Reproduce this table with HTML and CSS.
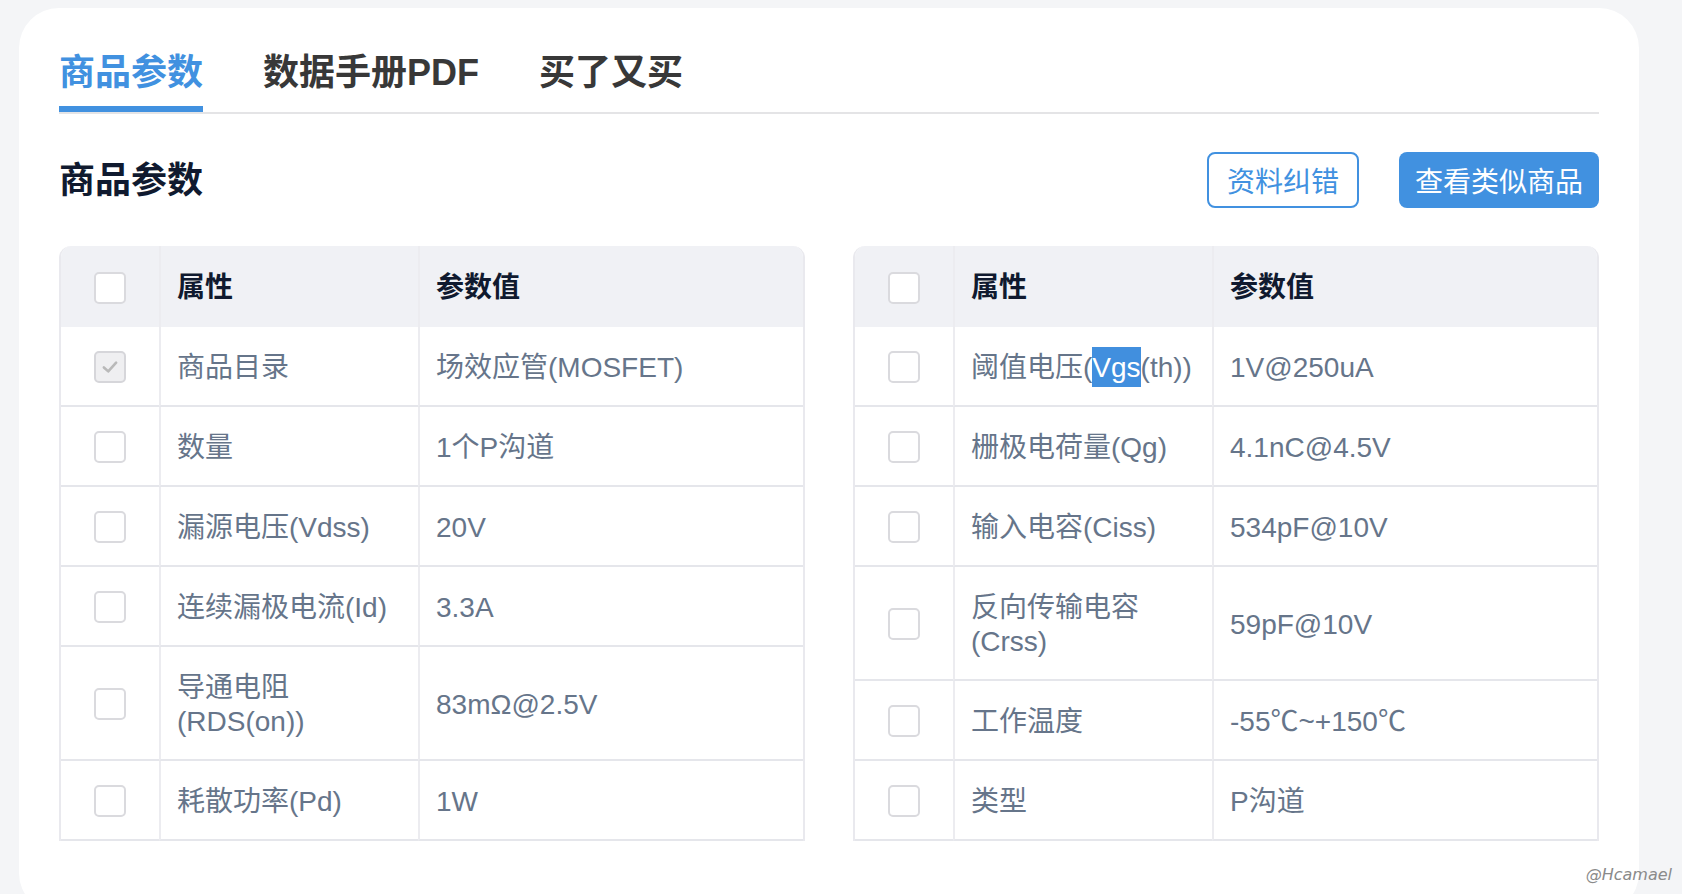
FILE: index.html
```html
<!DOCTYPE html>
<html>
<head>
  <meta charset="UTF-8">
  <meta name="viewport" content="width=device-width, initial-scale=1.0">
  <title>商品参数</title>
  <link rel="stylesheet" href="styles.css">
</head>
<body>
  <main class="card">
    <nav class="tabs">
      <a class="tab active">商品参数</a>
      <a class="tab">数据手册PDF</a>
      <a class="tab">买了又买</a>
    </nav>

    <section class="head-row">
      <h2 class="title">商品参数</h2>
      <div class="actions">
        <button class="btn btn-outline">资料纠错</button>
        <button class="btn btn-primary">查看类似商品</button>
      </div>
    </section>

    <section class="tables">
      <div class="table-wrap">
        <table class="params">
          <colgroup>
            <col class="col-check">
            <col class="col-attr">
            <col>
          </colgroup>
          <thead>
            <tr>
              <th><span class="checkbox"></span></th>
              <th>属性</th>
              <th>参数值</th>
            </tr>
          </thead>
          <tbody>
            <tr>
              <td><span class="checkbox checked"><svg viewBox="0 0 32 32" width="28" height="28"><polyline points="9,16.5 14,21 23,11" fill="none" stroke="#b9b9b9" stroke-width="3" stroke-linecap="round" stroke-linejoin="round"/></svg></span></td>
              <td>商品目录</td>
              <td>场效应管(MOSFET)</td>
            </tr>
            <tr>
              <td><span class="checkbox"></span></td>
              <td>数量</td>
              <td>1个P沟道</td>
            </tr>
            <tr>
              <td><span class="checkbox"></span></td>
              <td>漏源电压(Vdss)</td>
              <td>20V</td>
            </tr>
            <tr>
              <td><span class="checkbox"></span></td>
              <td>连续漏极电流(Id)</td>
              <td>3.3A</td>
            </tr>
            <tr>
              <td><span class="checkbox"></span></td>
              <td>导通电阻(RDS(on))</td>
              <td>83mΩ@2.5V</td>
            </tr>
            <tr>
              <td><span class="checkbox"></span></td>
              <td>耗散功率(Pd)</td>
              <td>1W</td>
            </tr>
          </tbody>
        </table>
      </div>

      <div class="table-wrap">
        <table class="params">
          <colgroup>
            <col class="col-check">
            <col class="col-attr">
            <col>
          </colgroup>
          <thead>
            <tr>
              <th><span class="checkbox"></span></th>
              <th>属性</th>
              <th>参数值</th>
            </tr>
          </thead>
          <tbody>
            <tr>
              <td><span class="checkbox"></span></td>
              <td>阈值电压(<span class="sel">Vgs</span>(th))</td>
              <td>1V@250uA</td>
            </tr>
            <tr>
              <td><span class="checkbox"></span></td>
              <td>栅极电荷量(Qg)</td>
              <td>4.1nC@4.5V</td>
            </tr>
            <tr>
              <td><span class="checkbox"></span></td>
              <td>输入电容(Ciss)</td>
              <td>534pF@10V</td>
            </tr>
            <tr>
              <td><span class="checkbox"></span></td>
              <td>反向传输电容(Crss)</td>
              <td>59pF@10V</td>
            </tr>
            <tr>
              <td><span class="checkbox"></span></td>
              <td>工作温度</td>
              <td>-55℃~+150℃</td>
            </tr>
            <tr>
              <td><span class="checkbox"></span></td>
              <td>类型</td>
              <td>P沟道</td>
            </tr>
          </tbody>
        </table>
      </div>
    </section>
  </main>

  <div class="watermark">@Hcamael</div>
</body>
</html>
```

FILE: styles.css
```css
* {
  box-sizing: border-box;
}

html,
body {
  overflow: hidden;
}

body {
  position: relative;

  width: 1682px;
  height: 894px;

  margin: 0;

  background-color: #f4f5f7;

  font-family: "Liberation Sans", "Noto Sans CJK SC", sans-serif;
}

.card {
  width: 1620px;
  height: 905px;

  margin: 8px 0 0 19px;
  padding: 38px 40px 0;

  background-color: #fff;
  border-radius: 40px;
}

/* tabs */

.tabs {
  display: flex;
  gap: 60px;

  border-bottom: 2px solid #e4e4e6;
}

.tab {
  padding: 2px 0 8px;
  border-bottom: 6px solid transparent;

  font-size: 36px;
  line-height: 50px;
  font-weight: bold;
  color: #383838;
}

.tab.active {
  color: #4191e0;
  border-bottom-color: #4191e0;
}

/* heading */

.head-row {
  display: flex;
  align-items: center;
  justify-content: space-between;

  margin-top: 38px;
}

.title {
  margin: 0;
  padding-top: 2px;

  font-size: 36px;
  line-height: 54px;
  font-weight: bold;
  color: #101a2f;
}

.actions {
  display: flex;
  gap: 40px;
}

.btn {
  height: 56px;
  padding: 0 16px;

  border-radius: 8px;

  font-family: inherit;
  font-size: 28px;
  white-space: nowrap;
  cursor: pointer;
}

.btn-outline {
  width: 152px;
  border: 2px solid #4191e0;
  background-color: #fff;
  color: #4191e0;
}

.btn-primary {
  width: 200px;
  border: none;
  background-color: #4191e0;
  color: #fff;
}

/* tables */

.tables {
  display: grid;
  grid-template-columns: 1fr 1fr;
  gap: 48px;

  margin-top: 38px;
}

.table-wrap {
  overflow: hidden;

  border-left: 2px solid #e9e9ee;
  border-right: 2px solid #e9e9ee;
  border-radius: 12px 12px 0 0;
}

.params {
  width: 100%;
  border-collapse: separate;
  border-spacing: 0;
  table-layout: fixed;

  font-size: 28px;
  line-height: 34px;
}

.col-check {
  width: 98px;
}

.col-attr {
  width: 259px;
}

.params th,
.params td {
  padding: 24px 16px 20px;
  text-align: left;
  vertical-align: middle;
}

.params th + th,
.params td + td {
  border-left: 2px solid #ececf0;
}

.params th {
  padding-top: 25px;
  padding-bottom: 22px;

  background-color: #f0f1f5;

  font-weight: bold;
  color: #101a2f;
}

.params td {
  border-bottom: 2px solid #e5e6eb;
  color: #66758a;
}

.params th:first-child,
.params td:first-child {
  padding: 0;
  text-align: center;
}

.checkbox {
  display: inline-flex;
  align-items: center;
  justify-content: center;

  width: 32px;
  height: 32px;

  vertical-align: middle;

  border: 2px solid #dadade;
  border-radius: 5px;
  background-color: #fff;
}

.checkbox.checked {
  background-color: #efeff1;
  border-color: #d6d6da;
}

.sel {
  padding: 5px 0 4px;
  background-color: #418fde;
  color: #fff;
}

.watermark {
  position: absolute;
  right: 10px;
  bottom: 10px;

  font-family: "DejaVu Sans", sans-serif;
  font-size: 16px;
  font-style: italic;
  color: #8a8a8a;
}
```
